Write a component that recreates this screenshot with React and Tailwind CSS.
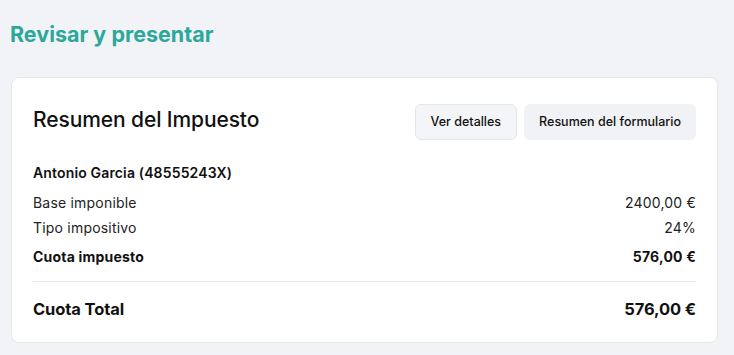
export default function App() {
  return (
    <div className="min-h-screen bg-[#f2f3f7] pl-[10px] pr-[15px] pt-[20px] pb-[12px]" style={{ fontFamily: "Inter, 'Noto Sans', sans-serif" }}>
      <h1 className="text-[21.5px] leading-[28px] font-bold text-[#2aa89a]">Revisar y presentar</h1>
      <div className="mt-[29px] mx-[1px] rounded-lg border border-[#e5e7eb] bg-white px-[21px] pt-[26px] pb-[21px] text-[#111]">
        <div className="flex items-center justify-between h-[36px]">
          <h2 className="text-[21px] font-medium text-[#111] tracking-[-0.1px] -mt-[5px]">Resumen del Impuesto</h2>
          <div className="flex gap-[7px]">
            <button className="h-[36px] px-[15px] rounded-md border border-[#e3e5ea] bg-[#f4f5f8] text-[12.5px] font-medium text-[#111]">Ver detalles</button>
            <button className="h-[36px] px-[15px] rounded-md bg-[#f1f2f5] text-[12.5px] font-medium text-[#111]">Resumen del formulario</button>
          </div>
        </div>
        <div className="mt-[23px] text-[14px] leading-[20px] font-semibold tracking-[0.15px]">Antonio Garcia (48555243X)</div>
        <div className="mt-[10px] flex justify-between text-[14px] leading-[20px] text-[#222] tracking-[0.2px]">
          <span>Base imponible</span><span>2400,00 €</span>
        </div>
        <div className="mt-[5px] flex justify-between text-[14px] leading-[20px] text-[#222] tracking-[0.2px]">
          <span>Tipo impositivo</span><span>24%</span>
        </div>
        <div className="mt-[9px] flex justify-between text-[14px] leading-[20px] font-bold tracking-[0.2px]">
          <span>Cuota impuesto</span><span>576,00 €</span>
        </div>
        <div className="mt-[14px] border-t border-[#e5e7eb]" />
        <div className="mt-[15px] flex justify-between text-[16.5px] leading-[24px] font-bold tracking-[-0.1px]">
          <span>Cuota Total</span><span>576,00 €</span>
        </div>
      </div>
    </div>
  );
}
